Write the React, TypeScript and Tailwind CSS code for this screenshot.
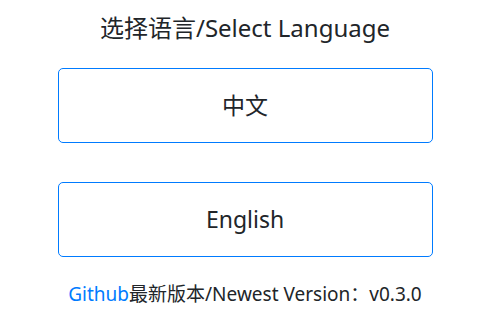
export default function App() {
  return (
    <div
      className="flex w-[490px] h-[312px] flex-col items-center bg-white text-[#212529]"
      style={{ fontFamily: '"Noto Sans", "Noto Sans CJK SC", sans-serif' }}
    >
      <h1 className="mt-[10px] text-[24px] font-normal leading-[36px]">选择语言/Select Language</h1>
      <button className="mt-[22px] h-[75px] w-[375px] rounded-[5px] border border-[#007bff] text-[23px] leading-none">
        中文
      </button>
      <button className="mt-[39px] h-[75px] w-[375px] rounded-[5px] border border-[#007bff] text-[23px] leading-none">
        English
      </button>
      <p className="mt-[23px] text-[19px] leading-[28px]">
        <a className="text-[#007bff]">Github</a>最新版本/Newest Version：v0.3.0
      </p>
    </div>
  );
}
